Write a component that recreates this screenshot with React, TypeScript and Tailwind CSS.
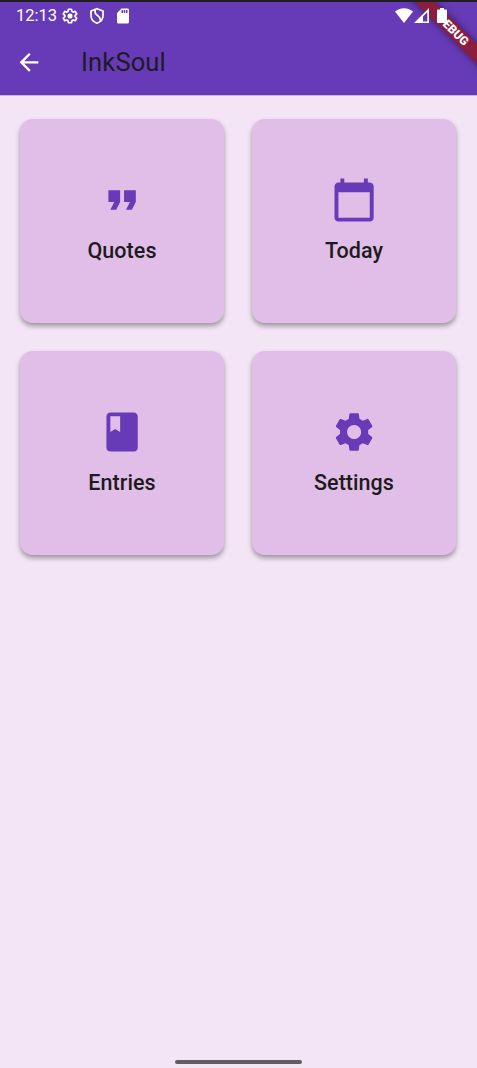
import type { ReactNode } from 'react';
import { MdCalendarToday, MdClass, MdFormatQuote, MdSettings, MdArrowBack, MdSdCard } from 'react-icons/md';

function GearOutline() {
  return (
    <svg className="ml-[3.500px] size-[18px]" viewBox="0 0 24 24" fill="none" stroke="currentColor" strokeWidth="2.3" strokeLinejoin="round">
      <path d="M10 3h4l.6 2.900 1.600.9 2.800-1 2 3.500-2.200 1.900v1.700l2.200 1.900-2 3.500-2.800-1-1.600.9L14 21h-4l-.6-2.800-1.600-.9-2.800 1-2-3.500 2.200-1.900v-1.700L3 9.300l2-3.500 2.800 1 1.600-.9z" />
      <circle cx="12" cy="12" r="3.400" fill="currentColor" stroke="none" />
    </svg>
  );
}

function StatusBar() {
  return (
    <div className="relative z-20 flex h-[27px] items-center text-white">
      <span className="ml-[16px] w-[41.500px] whitespace-nowrap text-[16.500px] leading-[27px]">12:13</span>
      <GearOutline />
      <svg className="ml-[8.500px] size-[18px]" viewBox="0 0 24 24" fill="none" stroke="currentColor" strokeWidth="2.300">
        <path d="M12 2.300 20 5.300v6.100c0 4.900-3.400 8.600-8 10.200-4.600-1.600-8-5.300-8-10.200V5.300z" />
        <path d="M9.500 3.500v3.500q0 1.500 1.200 2.600L15 13.500q1.600 1.600 1.400 4.500" />
      </svg>
      <MdSdCard className="ml-[8px] size-[18px]" />
      <svg className="ml-[263px] h-[15px] w-[18px] shrink-0" viewBox="0 0 18 15" fill="currentColor">
        <path d="M0 3.600C5.300-1 12.700-1 18 3.600L9 15z" />
      </svg>
      <svg className="ml-[1px] h-[15px] w-[15px] shrink-0" viewBox="0 0 15 15">
        <path fill="currentColor" fillRule="evenodd" d="M15 0v15H0zM13.300 4.200L9 8.500v4.900h4.300z" />
      </svg>
      <svg className="ml-[8px] h-[15px] w-[10px] shrink-0" viewBox="0 0 10 15" fill="currentColor">
        <path d="M3 0h4v1.500h2q1 0 1 1V14q0 1-1 1H1q-1 0-1-1V2.500q0-1 1-1h2z" />
      </svg>
    </div>
  );
}

function DebugBanner() {
  return (
    <div className="absolute right-0 top-[2px] z-10 size-[90px] overflow-hidden">
      <div className="absolute left-[-4px] top-[21px] flex h-[14px] w-[140px] rotate-45 items-center justify-center bg-[#8b1e3f] text-[12px] font-black leading-[14px] text-white shadow-[0_0_7px_rgba(0,0,0,0.5)]">
        DEBUG
      </div>
    </div>
  );
}

function Tile({ icon, label }: { icon: ReactNode; label: string }) {
  return (
    <button className="flex h-[204px] flex-col items-center rounded-[13px] bg-[#e1bee7] pt-[57px] text-[#673ab7] shadow-[0_3px_5px_rgba(0,0,0,0.36)]">
      {icon}
      <span className="mt-[15px] text-[21.500px] font-medium leading-[26px] tracking-[0.050px] text-[#1d1b20]">{label}</span>
    </button>
  );
}

export default function App() {
  return (
    <div className="relative flex h-[1068px] w-[477px] flex-col overflow-hidden bg-[#f3e5f5] font-['Roboto',sans-serif]">
      <div className="h-[2px] shrink-0 bg-[#211f22]" />
      <header className="h-[93px] shrink-0 bg-[#673ab7]">
        <StatusBar />
        <div className="flex h-[66px] items-center">
          <MdArrowBack className="ml-[15.400px] size-[28px] translate-y-[0.300px] text-white" />
          <h1 className="ml-[37.600px] text-[25.500px] leading-[32px] tracking-[0.150px] text-[#1d1b20]">InkSoul</h1>
        </div>
      </header>
      <DebugBanner />
      <div className="-mb-px h-px shrink-0 bg-[#c9b4e0]" />
      <main className="grid grid-cols-[204px_204px] gap-x-[28px] gap-y-[28.300px] pl-[20px] pt-[24px]">
        <Tile label="Quotes" icon={<MdFormatQuote className="size-[47px] -translate-x-[0.400px] translate-y-[0.500px]" />} />
        <Tile label="Today" icon={<MdCalendarToday className="size-[47px] -translate-x-[0.400px] translate-y-[0.500px]" />} />
        <Tile label="Entries" icon={<MdClass className="size-[47px] -translate-x-[0.400px] translate-y-[0.500px]" />} />
        <Tile label="Settings" icon={<MdSettings className="size-[47px] -translate-x-[0.400px] translate-y-[0.500px]" />} />
      </main>
      <div className="mb-[4px] ml-[174.500px] mt-auto h-[4.500px] w-[127px] rounded-full bg-[#625d63]" />
    </div>
  );
}
